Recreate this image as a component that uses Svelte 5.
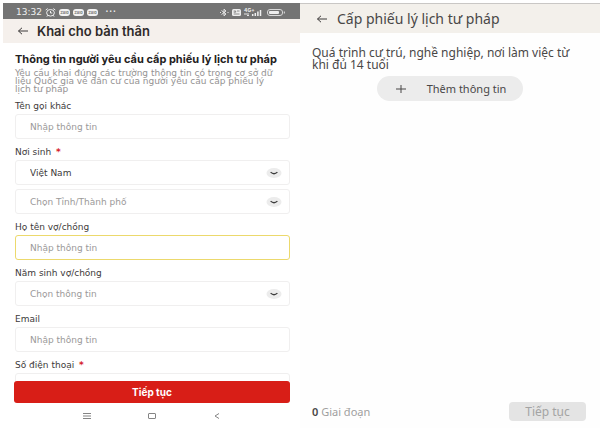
<script lang="ts">
  type Field = {
    id: string;
    label: string;
    required?: boolean;
    kind: 'text' | 'select';
    placeholder: string;
    highlighted?: boolean;
  };

  const fieldsAfterBirthplace: Field[] = [
    { id: 'spouse-name', label: 'Họ tên vợ/chồng', kind: 'text', placeholder: 'Nhập thông tin', highlighted: true },
    { id: 'spouse-year', label: 'Năm sinh vợ/chồng', kind: 'select', placeholder: 'Chọn thông tin' },
    { id: 'email', label: 'Email', kind: 'text', placeholder: 'Nhập thông tin' },
    { id: 'phone', label: 'Số điện thoại', required: true, kind: 'text', placeholder: '' }
  ];

  let country = $state('Việt Nam');
  let stageCount = $state(0);
</script>

{#snippet backArrow()}
  <svg class="back-icon" viewBox="0 0 12 10" aria-hidden="true">
    <path d="M11 5H1.5M5 1.8 1.5 5 5 8.2" />
  </svg>
{/snippet}

{#snippet chevron()}
  <svg class="chevron" viewBox="0 0 16 10" aria-hidden="true">
    <ellipse cx="8" cy="5" rx="7.5" ry="5" />
    <path d="M4.6 4.1Q8 7.3 11.4 4.1" />
  </svg>
{/snippet}

<div class="screens">
  <section class="phone">
    <div class="status-bar">
      <div class="status-group">
        <span class="time">13:32</span>
        <svg class="alarm" viewBox="0 0 11 9" aria-hidden="true">
          <ellipse cx="5.5" cy="4.8" rx="3.9" ry="3.3" />
          <path d="M.7 2 2.7.6M10.3 2 8.3.6M5.5 2.9v2.1h1.8M2.8 7.5 1.6 8.7M8.2 7.5l1.2 1.2" />
        </svg>
        <span class="pill">Zalo</span>
        <span class="pill">Zalo</span>
        <span class="pill">Zalo</span>
        <span class="more">···</span>
      </div>
      <svg class="signals" viewBox="0 0 67 9" aria-hidden="true">
        <path class="line" d="M2.5 2.5 7 6 5 7.8V1.2L7 3 2.5 6.5M1 4.5h1M8.5 4.5h1" />
        <rect x="13" y="1" width="9" height="7" rx="1.5" />
        <path class="dark" d="M14.7 3h2v1.2h-2M18 3h2.5M14.7 6h5.8" />
        <text x="25" y="4">4G+</text>
        <path class="line" d="M25 6h5M28 7.5h2" />
        <path class="bars" d="M33.7 8V6M36.3 8V5M38.9 8V3.5M41.5 8V2" />
        <rect class="battery" x="48.5" y="1.5" width="15" height="6" rx="2.5" />
        <rect x="50" y="3" width="10" height="3" rx="1" />
        <path class="line" d="M65.3 3.5v2" />
      </svg>
    </div>

    <header class="app-bar">
      <button class="icon-button" type="button" aria-label="Quay lại">{@render backArrow()}</button>
      <h1>Khai cho bản thân</h1>
    </header>

    <form class="form">
      <h2>Thông tin người yêu cầu cấp phiếu lý lịch tư pháp</h2>
      <p class="intro">
        Yêu cầu khai đúng các trường thông tin có trong cơ sở dữ
        liệu Quốc gia về dân cư của người yêu cầu cấp phiếu lý
        lịch tư pháp
      </p>

      <div class="field">
        <label for="other-name">Tên gọi khác</label>
        <input id="other-name" class="box" type="text" placeholder="Nhập thông tin" />
      </div>

      <div class="field">
        <label for="country">Nơi sinh <span class="required">*</span></label>
        <div class="select-wrap">
          <select id="country" class="box filled" bind:value={country}>
            <option>Việt Nam</option>
          </select>
          {@render chevron()}
        </div>
        <div class="select-wrap second">
          <select class="box" aria-label="Tỉnh/Thành phố">
            <option>Chọn Tỉnh/Thành phố</option>
          </select>
          {@render chevron()}
        </div>
      </div>

      {#each fieldsAfterBirthplace as field (field.id)}
        <div class="field">
          <label for={field.id}>
            {field.label}
            {#if field.required}<span class="required">*</span>{/if}
          </label>
          {#if field.kind === 'select'}
            <div class="select-wrap">
              <select id={field.id} class="box">
                <option>{field.placeholder}</option>
              </select>
              {@render chevron()}
            </div>
          {:else}
            <input
              id={field.id}
              class="box"
              class:highlighted={field.highlighted}
              type="text"
              placeholder={field.placeholder}
            />
          {/if}
        </div>
      {/each}
    </form>

    <div class="submit-bar">
      <button class="submit" type="button">Tiếp tục</button>
    </div>

    <div class="system-nav">
      <svg viewBox="0 0 10 8" aria-hidden="true"><path d="M1 1.5h8M1 4h8M1 6.5h8" /></svg>
      <svg viewBox="0 0 10 8" aria-hidden="true"><rect x="1.5" y="1.5" width="7" height="5" rx="0.5" /></svg>
      <svg viewBox="0 0 10 8" aria-hidden="true"><path d="M7 1.5 3 4l4 2.5" /></svg>
    </div>
  </section>

  <section class="history">
    <header class="history-bar">
      <button class="icon-button" type="button" aria-label="Quay lại">{@render backArrow()}</button>
      <h1>Cấp phiếu lý lịch tư pháp</h1>
    </header>

    <main class="history-body">
      <p>Quá trình cư trú, nghề nghiệp, nơi làm việc từ khi đủ 14 tuổi</p>
      <button class="add" type="button">
        <svg viewBox="0 0 10 10" aria-hidden="true"><path d="M5 1v8M0 5h10" /></svg>
        Thêm thông tin
      </button>
    </main>

    <footer class="history-footer">
      <span class="stages"><strong>{stageCount}</strong> Giai đoạn</span>
      <button class="next" type="button" disabled>Tiếp tục</button>
    </footer>
  </section>
</div>

<style>
  :global(body) {
    margin: 0;
    background: #fff;
  }

  .screens {
    display: grid;
    grid-template-columns: 1fr 1fr;
    box-sizing: border-box;
    height: 100vh;
    padding: 3px 0 4px;
  }

  h1,
  h2,
  p {
    margin: 0;
  }

  button,
  input,
  select {
    box-sizing: border-box;
    margin: 0;
    border: 0;
    font-family: inherit;
  }

  svg {
    display: block;
    flex: none;
  }

  .phone {
    display: flex;
    flex-direction: column;
    min-width: 0;
    min-height: 0;
    margin-left: 3px;
    color: #3d3a3a;
    font-family: 'DejaVu Sans', sans-serif;
    font-size: 9px;
  }

  .status-bar {
    display: flex;
    flex: none;
    align-items: center;
    justify-content: space-between;
    height: 16px;
    padding: 2px 14px 0 13px;
    box-sizing: border-box;
    background: #747474;
    color: #f0f0f0;
  }

  .status-group {
    display: flex;
    align-items: center;
    gap: 3px;
  }

  .time {
    font-size: 9px;
    line-height: 12px;
  }

  .alarm {
    width: 11px;
    height: 9px;
    fill: none;
    stroke: #f0f0f0;
  }

  .pill {
    width: 11px;
    border-radius: 3px;
    background: #f3f3f3;
    color: #777;
    font-family: Inter, sans-serif;
    font-size: 4px;
    font-weight: 700;
    line-height: 7px;
    text-align: center;
  }

  .more {
    margin-left: 4px;
    font-size: 12px;
    line-height: 12px;
  }

  .signals {
    width: 67px;
    height: 9px;
    fill: #ededed;
    font-family: Inter, sans-serif;
    font-size: 5px;
    font-weight: 700;
  }

  .signals .line {
    fill: none;
    stroke: #f0f0f0;
    stroke-width: 0.9;
  }

  .signals .dark {
    fill: none;
    stroke: #747474;
    stroke-width: 0.8;
  }

  .signals .bars {
    stroke: #f0f0f0;
    stroke-width: 1.5;
  }

  .signals .battery {
    fill: none;
    stroke: #d8d8d8;
  }

  .app-bar {
    display: flex;
    flex: none;
    align-items: center;
    gap: 8px;
    height: 24px;
    padding: 0 14px;
    background: #f5f0ec;
  }

  .app-bar h1 {
    color: #2f2a29;
    font-family: Inter, sans-serif;
    font-size: 13px;
    font-weight: 600;
    line-height: 16px;
  }

  .icon-button {
    padding: 0;
    background: none;
  }

  .back-icon {
    width: 12px;
    height: 10px;
    fill: none;
    stroke: #3d3a3a;
  }

  .form {
    flex: 1;
    min-height: 0;
    padding: 10px 10px 0 12px;
    overflow: hidden;
  }

  h2 {
    color: #242121;
    font-family: Inter, sans-serif;
    font-size: 11px;
    font-weight: 700;
    line-height: 12px;
    white-space: nowrap;
  }

  .intro {
    margin: 4px 0 5px;
    color: #949292;
    font-size: 9px;
    line-height: 8px;
    white-space: pre-line;
  }

  .field {
    margin-bottom: 5px;
  }

  label {
    display: block;
    font-size: 9px;
    line-height: 16px;
  }

  .required {
    margin-left: 2px;
    color: #d5202a;
    font-weight: 700;
  }

  .box {
    display: block;
    width: 100%;
    height: 25px;
    padding: 0 14px;
    border: 1px solid #f0efef;
    border-radius: 3px;
    background: #fff;
    color: #9b9999;
    font-size: 9px;
    line-height: 16px;
    appearance: none;
    outline: none;
  }

  .box::placeholder {
    color: #9b9999;
    opacity: 1;
  }

  .box.filled {
    color: #3d3a3a;
  }

  .box.highlighted {
    border-color: #ecd96c;
  }

  .select-wrap {
    display: grid;
    align-items: center;
  }

  .select-wrap.second {
    margin-top: 4px;
  }

  .select-wrap > * {
    grid-area: 1 / 1;
  }

  .chevron {
    justify-self: end;
    width: 16px;
    height: 10px;
    margin-right: 8px;
    pointer-events: none;
    fill: #ececec;
  }

  .chevron path {
    fill: none;
    stroke: #3b3b3b;
    stroke-width: 1.3;
  }

  .submit-bar {
    flex: none;
    padding: 0 10px 0 11px;
  }

  .submit {
    width: 100%;
    height: 22px;
    border-radius: 3px;
    background: #d81e17;
    color: #fff;
    font-family: Inter, sans-serif;
    font-size: 10px;
    font-weight: 700;
  }

  .system-nav {
    display: flex;
    flex: none;
    justify-content: center;
    gap: 55px;
    padding: 9px 0 8px;
  }

  .system-nav svg {
    width: 10px;
    height: 8px;
    fill: none;
    stroke: #858585;
  }

  .history {
    display: flex;
    flex-direction: column;
    min-width: 0;
    min-height: 0;
    background: #fefefe;
    color: #494747;
    font-family: 'Noto Sans', sans-serif;
    font-size: 12px;
  }

  .history-bar {
    display: flex;
    flex: none;
    align-items: center;
    gap: 9px;
    height: 30px;
    padding: 0 16px;
    box-sizing: border-box;
    border-top: 1px solid #c9c7c5;
    background: #f3f0eb;
  }

  .history-bar h1 {
    font-size: 14px;
    font-weight: 400;
    line-height: 16px;
  }

  .history-body {
    display: flex;
    flex: 1;
    flex-direction: column;
    align-items: center;
    gap: 5px;
    padding: 14px 12px 0;
  }

  .history-body p {
    align-self: stretch;
    font-size: 12px;
    line-height: 12px;
  }

  .add {
    display: flex;
    align-items: center;
    gap: 21px;
    height: 25px;
    padding: 0 17px 0 19px;
    border-radius: 13px;
    background: #ececec;
    color: #494747;
    font-size: 11px;
  }

  .add svg {
    width: 10px;
    height: 10px;
    stroke: #494747;
  }

  .history-footer {
    display: flex;
    flex: none;
    align-items: center;
    justify-content: space-between;
    padding: 0 14px 7px 12px;
  }

  .stages {
    color: #a09f9f;
    font-size: 11px;
    line-height: 16px;
  }

  .stages strong {
    color: #494747;
    font-weight: 600;
  }

  .next {
    min-width: 77px;
    height: 19px;
    padding: 0;
    border-radius: 4px;
    background: #e4e4e4;
    color: #a3a3a3;
    font-size: 12px;
    line-height: 16px;
  }
</style>
